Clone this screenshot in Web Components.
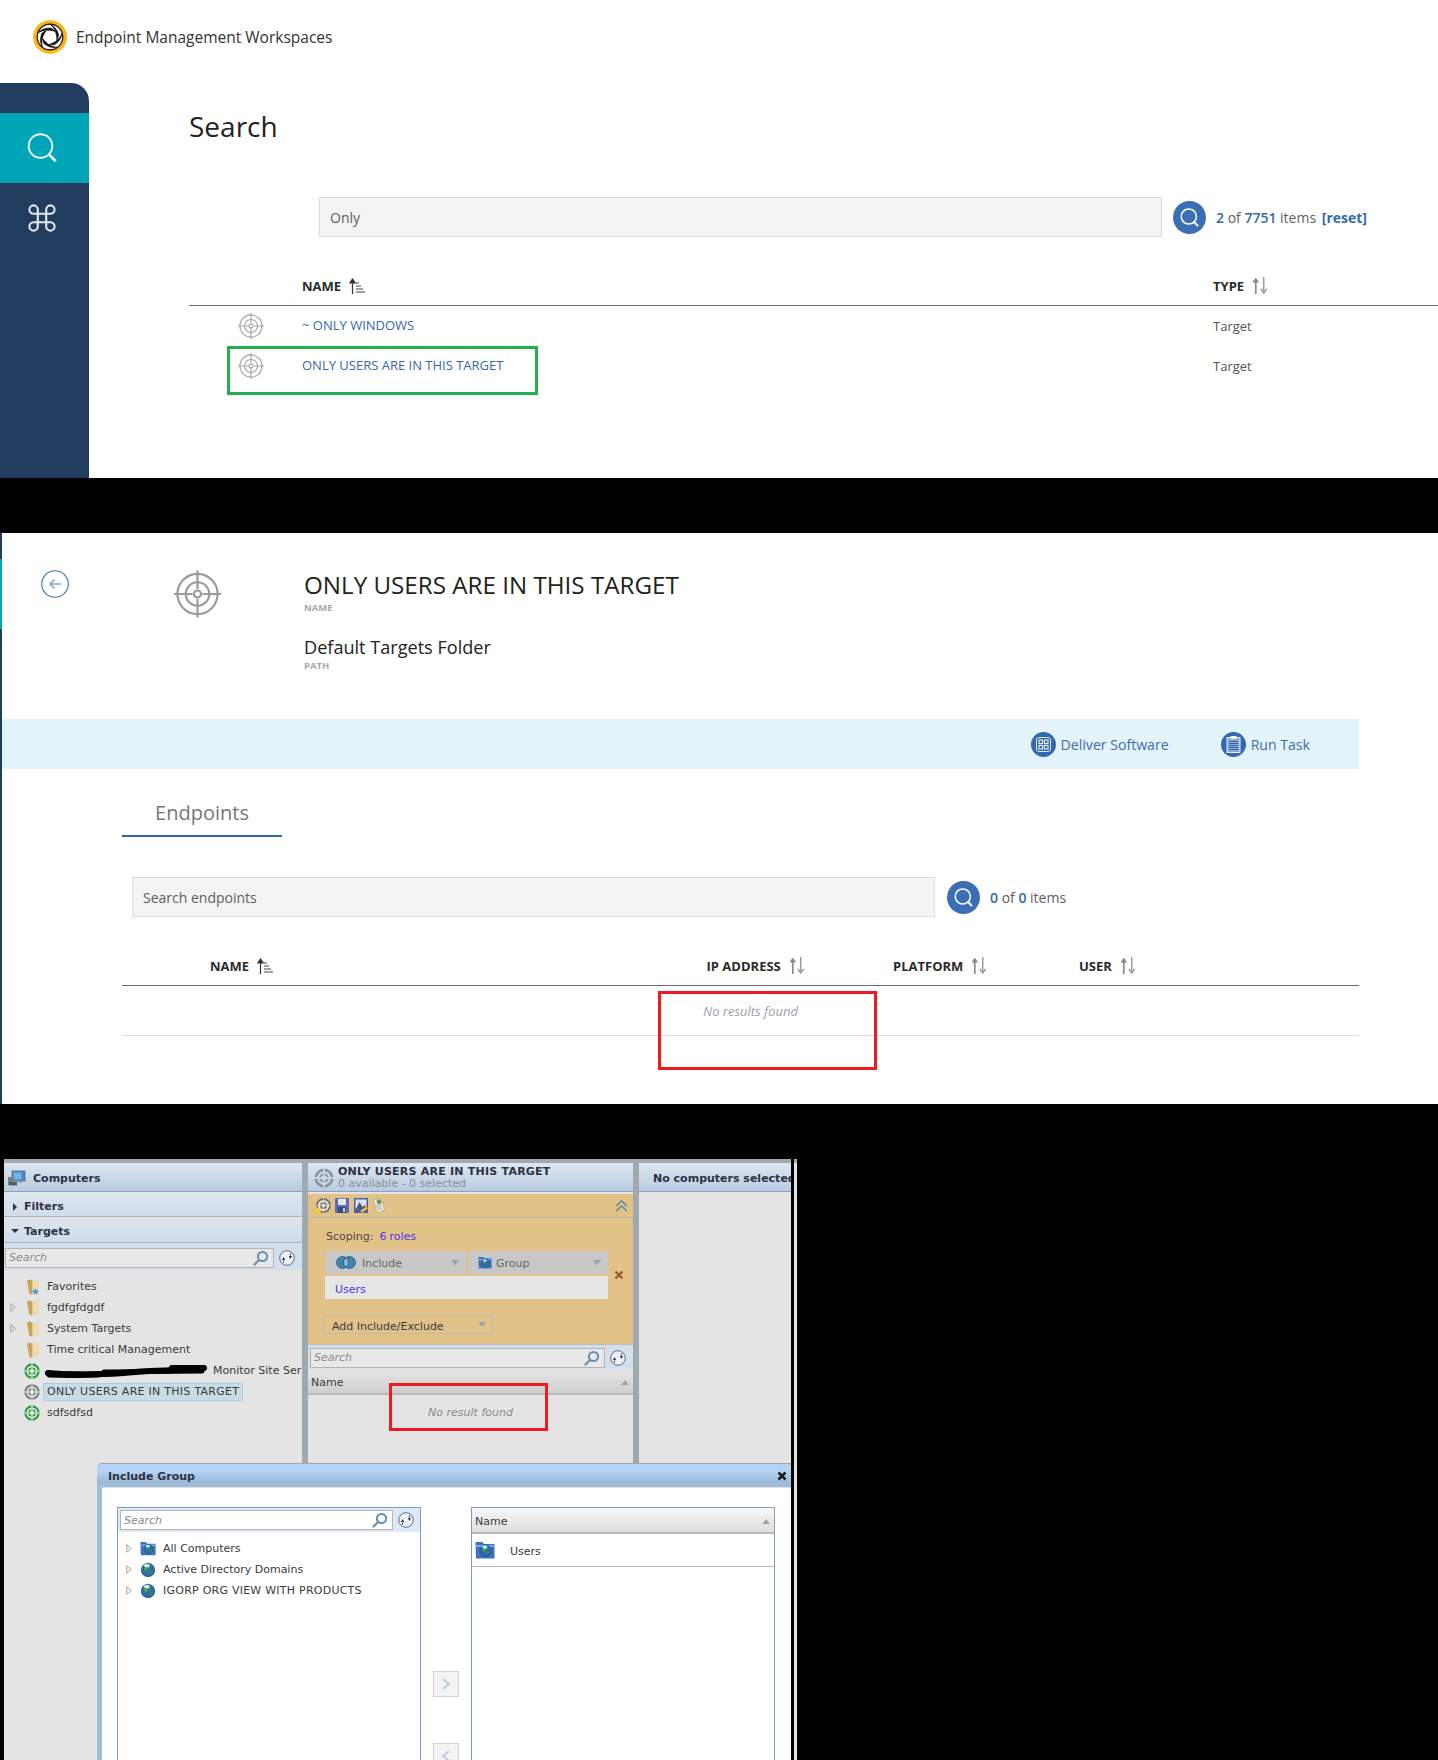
<!DOCTYPE html>
<html lang="en"><head><meta charset="utf-8"><title>Endpoint Management Workspaces</title>
<style>
html,body{margin:0;padding:0;background:#000;}
body{width:1438px;height:1760px;overflow:hidden;font-family:"Open Sans","Noto Sans",sans-serif;}
</style></head><body>
<search-page></search-page>
<detail-page></detail-page>
<legacy-console></legacy-console>
<script>
const targetLg=(c)=>`<svg viewBox="0 0 48 48" width="100%" height="100%" fill="none" stroke="${c}" stroke-width="2.2"><circle cx="24" cy="24" r="20.5"/><circle cx="24" cy="24" r="12"/><circle cx="24" cy="24" r="3.6"/><path d="M24 0v19M24 29v19M0 24h19M29 24h19"/></svg>`;
const targetSm=(c,bg)=>`<svg viewBox="0 0 16 16" width="100%" height="100%" fill="none"><circle cx="8" cy="8" r="6.6" stroke="${c}" stroke-width="2.2"/><circle cx="8" cy="8" r="3" stroke="${c}" stroke-width="1.6"/><path d="M8 0v6M8 10v6M0 8h6M10 8h6" stroke="${bg}" stroke-width="1.1"/></svg>`;
const globe=`<circle cx="8" cy="8" r="6.800" fill="#2a6ea8" stroke="#234a6c" stroke-width=".6"/><path d="M4 6c1.500-1.600 3-1 4-1.800.8.500 2 .8 2.400 1.800-1.200 1-2.400.3-3.200 1.200-.8.900.3 1.800-.8 2.500C5.200 9.200 4.200 7.400 4 6z" fill="#55a548"/><path d="M9.500 10c1-.6 2.200-.4 3 0-.5 1.400-1.400 2.300-2.700 2.800-.6-.8-.6-1.800-.3-2.800z" fill="#3f8f3a"/><path d="M1.600 10.500c2.800 5 10 5 12.800 0-1 4.800-11.800 4.800-12.800 0z" fill="#142c48"/><ellipse cx="6.800" cy="3.600" rx="3" ry="1.700" fill="#e8f6fd" opacity=".92"/>`;
const blades=[0,72,144,216,288].map(r=>`<path transform="rotate(${r} 17 17)" d="M17 4.300C21.500 7.800 23.800 13 23.800 20.300 24.600 18.600 25.300 17 25.800 15.300 24.800 10.600 21.500 6 17 4.300z" fill="#111" stroke="#111" stroke-width=".5"/>`).join('');
const ICONS={
 logo:`<svg viewBox="0 0 34 34" width="100%" height="100%"><ellipse cx="17" cy="17" rx="17" ry="16.700" fill="#fdb515"/><circle cx="17" cy="17" r="12.800" fill="#fff" stroke="#111" stroke-width="1.200"/>${blades}</svg>`,
 navsearch:`<svg viewBox="0 0 30 30" width="100%" height="100%" fill="none" stroke="#e9f7f9" stroke-width="2"><circle cx="13.500" cy="13" r="11.800"/><path d="M22 21.500l6 6" stroke-width="2.600" stroke-linecap="round"/></svg>`,
 navcmd:`<svg viewBox="2 2 20 20" width="100%" height="100%" fill="none" stroke="#e4e9f0" stroke-width="1.500"><path d="M18 3a3 3 0 0 0-3 3v12a3 3 0 0 0 3 3 3 3 0 0 0 3-3 3 3 0 0 0-3-3H6a3 3 0 0 0-3 3 3 3 0 0 0 3 3 3 3 0 0 0 3-3V6a3 3 0 0 0-3-3 3 3 0 0 0-3 3 3 3 0 0 0 3 3h12a3 3 0 0 0 3-3 3 3 0 0 0-3-3z"/></svg>`,
 gosearch:`<svg viewBox="0 0 33 33" width="100%" height="100%" fill="none"><circle cx="16.500" cy="16.500" r="16.500" fill="#3a6fb5"/><circle cx="15.800" cy="15.500" r="7.600" stroke="#fff" stroke-width="1.500"/><path d="M21 21l3.500 3.500" stroke="#fff" stroke-width="1.900" stroke-linecap="round"/></svg>`,
 sortasc:`<svg viewBox="0 0 17 16" width="100%" height="100%"><path d="M3.500 16V3M.8 5l2.700-4L6.200 5z" stroke="#333" stroke-width="1.200" fill="#333"/><path d="M7 5h3M7 8h5M7 11h7M7 14h9" stroke="#444" stroke-width="1.200"/></svg>`,
 sortboth:`<svg viewBox="0 0 17 18" width="100%" height="100%" fill="#888" stroke="#888"><path d="M4 18V3" stroke-width="1.800"/><path d="M1 5.500 4 1l3 4.500z" stroke-width=".6"/><path d="M12.500 0v15" stroke-width="1.300"/><path d="M9.500 12.500l3 4.500 3-4.500" fill="none" stroke-width="1.300"/></svg>`,
 back:`<svg viewBox="0 0 28 28" width="100%" height="100%" fill="none" stroke="#3a6fb5"><circle cx="14" cy="14" r="13.300" stroke-width="1.100"/><path d="M20 14H9M13.500 9.500 9 14l4.500 4.500" stroke="#7da3d3" stroke-width="1.500"/></svg>`,
 targetline:targetLg('#a8a8a8'),
 targetbig:targetLg('#9a9a9a'),
 deliver:`<svg viewBox="0 0 25 25" width="100%" height="100%" fill="none"><circle cx="12.500" cy="12.500" r="12.500" fill="#3168b0"/><rect x="5.500" y="5.500" width="14" height="14" rx="2.500" stroke="#dbe8f6" stroke-width="1"/><g stroke="#fff" stroke-width="1"><rect x="8" y="8" width="3.600" height="3.600"/><rect x="13.400" y="8" width="3.600" height="3.600"/><rect x="8" y="13.400" width="3.600" height="3.600"/><rect x="13.400" y="13.400" width="3.600" height="3.600"/></g></svg>`,
 task:`<svg viewBox="0 0 25 25" width="100%" height="100%" fill="none"><circle cx="12.500" cy="12.500" r="12.500" fill="#3168b0"/><rect x="6" y="5.500" width="13" height="15" fill="#8aabd8" stroke="#e4edf8" stroke-width="1"/><rect x="9.500" y="4" width="6" height="3" fill="#fff"/><path d="M8 9.500h9M8 11.500h9M8 13.500h9M8 15.500h9M8 17.500h9" stroke="#2f5f9f" stroke-width=".9"/></svg>`,
 folder:`<svg viewBox="0 0 12 16" width="100%" height="100%"><path d="M0 1.500 3 .5l2 1h7v13.500H2z" fill="#e6cc94"/><path d="M0 1.500 3 .5 5.500 2V15.500L2.500 15z" fill="#c9a45e"/><path d="M5.500 2H12v13H5.500z" fill="#ecdcb4"/></svg>`,
 folderstar:`<svg viewBox="0 0 12 16" width="100%" height="100%"><path d="M0 1.500 3 .5l2 1h7v13.500H2z" fill="#e6cc94"/><path d="M0 1.500 3 .5 5.500 2V15.500L2.500 15z" fill="#c9a45e"/><path d="M5.500 2H12v13H5.500z" fill="#ecdcb4"/><path d="M8.500 9l1.100 2.300 2.400.3-1.700 1.700.4 2.500-2.200-1.200-2.300 1.200.5-2.500-1.800-1.700 2.500-.3z" fill="#4c9ad8"/></svg>`,
 tgreen:targetSm('#2d9e3d','#e4e4e4'),
 tgray:targetSm('#7f7f7f','#e4e4e4'),
 thead:targetSm('#8f9499','#d5deea'),
 arrow:`<svg viewBox="0 0 6 9" width="100%" height="100%"><path d="M.8.8 5.200 4.500.8 8.200z" fill="none" stroke="#9a9a9a" stroke-width=".9"/></svg>`,
 glass:`<svg viewBox="0 0 16 16" width="100%" height="100%" fill="none"><circle cx="9.500" cy="6.500" r="4.600" stroke="#5d90b8" stroke-width="2"/><path d="M6 10l-4.500 4.500" stroke="#7f8f9e" stroke-width="2.400" stroke-linecap="round"/></svg>`,
 refresh:`<svg viewBox="0 0 16 16" width="100%" height="100%" fill="none"><circle cx="8" cy="8" r="7.300" fill="#eef0f6" stroke="#6a6394" stroke-width="1"/><path d="M3 10h3.200L4.600 7zM13 6H9.800l1.600 3z" fill="#223a5a"/><path d="M4.600 10.500v2M11.400 5.500v-2" stroke="#223a5a" stroke-width="1"/></svg>`,
 computers:`<svg viewBox="0 0 19 17" width="100%" height="100%"><rect x="5" y="1" width="13" height="10" fill="#4a86c8" stroke="#5a6b80" stroke-width=".8"/><rect x="6.500" y="2.500" width="8" height="7" fill="#73b2e8"/><rect x="1" y="7" width="6" height="8" fill="#7a8088"/><rect x="2" y="12" width="8" height="3.500" fill="#565c64"/><rect x="11" y="11" width="4" height="2" fill="#9aa4ae"/></svg>`,
 caretright:`<svg viewBox="0 0 8 8" width="100%" height="100%"><path d="M2 0l4 4-4 4z" fill="#333"/></svg>`,
 caretdown:`<svg viewBox="0 0 8 8" width="100%" height="100%"><path d="M0 2h8L4 6z" fill="#333"/></svg>`,
 tb1:`<svg viewBox="0 0 16 16" width="100%" height="100%"><circle cx="8.500" cy="7.500" r="6.500" fill="#e8e4d8" stroke="#6f6f6f" stroke-width="1.800"/><circle cx="8.500" cy="7.500" r="2.800" fill="none" stroke="#6f6f6f" stroke-width="1.400"/><path d="M8.500 0v15M1 7.500h15" stroke="#dcd4c0" stroke-width=".8"/><path d="M3.200 9.500v6M.2 12.500h6" stroke="#f2cf2d" stroke-width="2.400"/></svg>`,
 tb2:`<svg viewBox="0 0 14 15" width="100%" height="100%"><rect width="14" height="15" rx="1" fill="#5a6cb8"/><rect x="3" y=".8" width="8" height="6.200" fill="#e4e6f0"/><rect x="3" y="9" width="8" height="6" fill="#3a4a86"/><rect x="8" y="10" width="2" height="4" fill="#c8d0e8"/></svg>`,
 tb3:`<svg viewBox="0 0 14 15" width="100%" height="100%"><rect width="14" height="15" fill="#4a60ac"/><rect x="1.500" y="1.500" width="11" height="9" fill="#dde3f2"/><path d="M2 11l3.500-7 3 5 2-2 2.500 4z" fill="#46597d"/><path d="M7 14 13.500 9" stroke="#f0c020" stroke-width="2.400"/><path d="M13 9.500l1-1" stroke="#c8402a" stroke-width="2.400"/></svg>`,
 tb4:`<svg viewBox="0 0 12 15" width="100%" height="100%"><path d="M.5 1.500l8-1.200 3 11.700-7.500 2.800z" fill="#f2f0e4" stroke="#a8a494" stroke-width=".7"/><circle cx="6" cy="3.700" r="2.400" fill="#5aa24a"/><path d="M6 3.700l2.300-.8.200 1.800z" fill="#c84a3a"/><path d="M3 7.500l5.500-1M3.500 9.500l5.500-1M4 11.500l5-1" stroke="#98968a" stroke-width=".8"/></svg>`,
 chevup:`<svg viewBox="0 0 13 12" width="100%" height="100%" fill="none" stroke="#5c86a6" stroke-width="1.500"><path d="M1 6l5.500-5L12 6M1 11l5.500-5L12 11"/></svg>`,
 venn:`<svg viewBox="0 0 20 13" width="100%" height="100%"><circle cx="6.500" cy="6.500" r="6" fill="#3c86b4" stroke="#24506e" stroke-width=".7"/><circle cx="13.500" cy="6.500" r="6" fill="#3c86b4" stroke="#24506e" stroke-width=".7"/><path d="M10 1.700a6 6 0 0 1 0 9.600 6 6 0 0 1 0-9.600z" fill="#9ab8cc" stroke="#24506e" stroke-width=".7"/></svg>`,
 groupico:`<svg viewBox="0 0 20 18" width="100%" height="100%"><path d="M.5 1h7l1.500 2h10.500v14.500H1z" fill="#3e72c4"/><path d="M1 4h18.500v2H1z" fill="#7aa6e4"/><g transform="translate(4 3) scale(.85)">${globe}</g></svg>`,
 globe:`<svg viewBox="0 0 16 16" width="100%" height="100%">${globe}</svg>`,
 cross:`<svg viewBox="0 0 10 10" width="100%" height="100%"><path d="M1.500 1.500l7 7M8.500 1.500l-7 7" stroke="#9a5a33" stroke-width="2.400"/></svg>`,
 crossblack:`<svg viewBox="0 0 10 10" width="100%" height="100%"><path d="M1.500 1.500l7 7M8.500 1.500l-7 7" stroke="#1c1c1c" stroke-width="2.600"/></svg>`,
 triup:`<svg viewBox="0 0 8 5" width="100%" height="100%"><path d="M0 5l4-5 4 5z" fill="#98a4b0"/></svg>`,
 tridown:`<svg viewBox="0 0 8 5" width="100%" height="100%"><path d="M0 0l4 5 4-5z" fill="#98a4b0"/></svg>`,
 scribble:`<svg viewBox="0 0 164 14" width="100%" height="100%" fill="none" stroke="#000" stroke-linecap="round"><path d="M4 9c20 2 35 1 52 1 18 0 30-2 50-3 20 0 35-2 54-3" stroke-width="6"/><path d="M5 11c20 1 40 0 50 0M60 8c30 0 60-1 98-1" stroke-width="5"/><path d="M128 4h30" stroke-width="6"/></svg>`
};
class UiIcon extends HTMLElement{
 constructor(){super();this.attachShadow({mode:'open'});}
 connectedCallback(){
  const w=this.getAttribute('w')||16,h=this.getAttribute('h')||w;
  this.shadowRoot.innerHTML=`<style>:host{display:block;flex:none;width:${w}px;height:${h}px;line-height:0}svg{display:block}</style>${ICONS[this.getAttribute('name')]||''}`;
 }
}
customElements.define('ui-icon',UiIcon);
function el(name,css,html){
 customElements.define(name,class extends HTMLElement{
  constructor(){super();const r=this.attachShadow({mode:'open'});
   const a=n=>this.getAttribute(n)||'';
   r.innerHTML=`<style>${css}</style>`+(typeof html==='function'?html(a):html);}
 });
}
/* modern UI pieces */
el('search-field',`:host{display:flex;align-items:center;font:14px "Open Sans",sans-serif;color:#5f6062}
 .f{box-sizing:border-box;height:40px;background:#f3f3f3;border:1px solid #dcdcdc;padding:0 10px;display:flex;align-items:center}
 .g{margin-left:var(--btn-gap,11px);margin-right:var(--txt-gap,10px)}
 ::slotted(b){color:#3568ae;font-weight:600}::slotted(a){color:#3568ae;font-weight:700;margin-left:2px}`,
 a=>`<div class="f" style="width:${a('w')}px">${a('text')}</div><ui-icon class="g" name="gosearch" w="33"></ui-icon><span><slot></slot></span>`);
el('sort-head',`:host{display:flex;align-items:center;gap:8px;font:700 13px "Open Sans",sans-serif;color:#2b2b2b;white-space:nowrap}
 ui-icon{margin-top:-1px}`,
 a=>`<span><slot></slot></span><ui-icon name="${a('sort')==='asc'?'sortasc':'sortboth'}" w="${a('sort')==='asc'?17:16}" h="${a('sort')==='asc'?16:17}"></ui-icon>`);
el('note-box',`:host{display:block;position:absolute;box-sizing:border-box;border-style:solid;border-width:3px;pointer-events:none}`,'');
el('action-link',`:host{display:flex;align-items:center;gap:5px;font:14.100px "Open Sans",sans-serif;color:#3f6cae;white-space:nowrap}`,
 a=>`<ui-icon name="${a('icon')}" w="25"></ui-icon><slot></slot>`);
el('side-nav',`:host{display:block;width:89px;flex:none;background:#223c60;border-top-right-radius:18px;padding-top:30px;box-sizing:border-box}
 .i{height:70px;display:flex;align-items:center;padding-left:27px}.on{background:#00a5b8}.c{padding-left:28px}`,
 `<div class="i on"><ui-icon name="navsearch" w="30"></ui-icon></div><div class="i c"><ui-icon name="navcmd" w="28"></ui-icon></div>`);
el('search-page',`:host{display:block;height:478px;background:#fff;overflow:hidden}
 header{height:73px;padding:0 0 10px 33px;display:flex;align-items:center;gap:9px;font:15.500px "Open Sans",sans-serif;color:#333}
 .b{display:flex;height:395px}
 main{flex:1;padding-left:100px;min-width:0}
 h1{font:400 28px/40px "Open Sans",sans-serif;color:#222;margin:23px 0 51px}
 search-field{margin-left:130px}
 .t{position:relative}
 .r{display:grid;grid-template-columns:113px 911px 1fr;align-items:center}
 .h{align-items:end;border-bottom:1px solid #6e6e72;box-sizing:border-box;padding-bottom:10px;height:69px}
 .d{height:40px;font:13px "Open Sans",sans-serif;color:#555}
 .d a{color:#3568ae;padding-bottom:2px}.ic{padding-left:49px}
 note-box{left:38px;top:109px;width:311px;height:49px;border-color:#22b14c}`,
 `<header><ui-icon name="logo" w="34"></ui-icon><span>Endpoint Management Workspaces</span></header>
 <div class="b"><side-nav></side-nav><main><h1>Search</h1>
 <search-field w="843" text="Only"><b>2</b> of <b>7751</b> items <a>[reset]</a></search-field>
 <div class="t"><div class="r h"><span></span><sort-head sort="asc">NAME</sort-head><sort-head>TYPE</sort-head></div>
 <div class="r d"><div class="ic"><ui-icon name="targetline" w="26"></ui-icon></div><a>~ ONLY WINDOWS</a><span>Target</span></div>
 <div class="r d"><div class="ic"><ui-icon name="targetline" w="26"></ui-icon></div><a>ONLY USERS ARE IN THIS TARGET</a><span>Target</span></div>
 <note-box></note-box></div></main></div>`);
el('detail-page',`:host{display:block;height:571px;margin-top:55px;background:#fff;position:relative;overflow:hidden}
 .w{display:flex;height:100%}
 .s{width:2px;flex:none;background:linear-gradient(#223c60 26px,#00a5b8 26px,#00a5b8 96px,#223c60 96px)}
 .m{flex:1;min-width:0}
 .top{height:186px;box-sizing:border-box;padding-top:37px;display:flex;align-items:flex-start}
 .bk{margin-left:39px}.tg{margin-left:105px}
 .txt{margin-left:83px;margin-top:-1px;color:#222}
 .n{font:400 24.200px/32px "Open Sans",sans-serif;white-space:nowrap}
 .l{font:700 9.500px/12px "Open Sans",sans-serif;color:#a8a8a8;margin-top:1px}
 .p{font:400 18.100px/24px "Open Sans",sans-serif;margin-top:21px}
 .l2{margin-top:1px}
 .band{width:1357px;height:50px;background:#e3f3fa;display:flex;justify-content:flex-end;align-items:center;gap:52px;padding-right:49px;box-sizing:border-box}
 .tab{margin-left:120px;width:160px;height:68px;box-sizing:border-box;padding-top:29px;border-bottom:2px solid #2f66ae;text-align:center;font:20px/30px "Open Sans",sans-serif;color:#777}
 search-field{margin:40px 0 0 130px;--btn-gap:11.500px;--txt-gap:10.500px}
 .t{position:relative;margin-left:120px;width:1237px}
 .r{display:grid;grid-template-columns:88px 496.500px 186.500px 186px 1fr;align-items:end;height:69px;box-sizing:border-box;padding-bottom:10px;border-bottom:1px solid #6e6e72}
 .nr{height:50px;box-sizing:border-box;border-bottom:1px solid #ddd;padding:16px 0 0 581px;font:italic 13px/18px "Open Sans",sans-serif;color:#9aa2a8}
 note-box{left:536px;top:74px;width:219px;height:79px;border-color:#ed1c24}`,
 `<div class="w"><div class="s"></div><div class="m">
 <div class="top"><ui-icon class="bk" name="back" w="28"></ui-icon><ui-icon class="tg" name="targetbig" w="47" h="48"></ui-icon>
 <div class="txt"><div class="n">ONLY USERS ARE IN THIS TARGET</div><div class="l">NAME</div><div class="p">Default Targets Folder</div><div class="l l2">PATH</div></div></div>
 <div class="band"><action-link icon="deliver">Deliver Software</action-link><action-link icon="task">Run Task</action-link></div>
 <div class="tab">Endpoints</div>
 <search-field w="803" text="Search endpoints"><b>0</b> of <b>0</b> items</search-field>
 <div class="t"><div class="r"><span></span><sort-head sort="asc">NAME</sort-head><sort-head>IP ADDRESS</sort-head><sort-head>PLATFORM</sort-head><sort-head>USER</sort-head></div>
 <div class="nr">No results found</div><note-box></note-box></div>
 </div></div>`);
/* legacy console pieces */
const LF='11px "DejaVu Sans",Verdana,sans-serif';
el('leg-head',`:host{display:flex;align-items:center;height:29px;box-sizing:border-box;padding-top:var(--hp,2px);border-bottom:1px solid #8aa2bd;background:linear-gradient(#dfe6ef,#b9cbe1);font:700 ${LF};color:#2c3244;white-space:nowrap;overflow:hidden}`,`<slot></slot>`);
el('leg-acc',`:host{display:flex;align-items:center;gap:5px;box-sizing:border-box;padding-left:7px;margin-top:2px;background:linear-gradient(#dce5ef,#d0dcea);border-bottom:1px solid #a8b4c2;font:700 ${LF};color:#2c3244}`,
 a=>`<ui-icon name="${a('icon')}" w="8" h="8"></ui-icon><slot></slot>`);
el('leg-search',`:host{display:flex;align-items:center;box-sizing:border-box;height:var(--h,27px);background:var(--bg,#d3dfeb);padding-left:var(--pl,1px);padding-top:var(--pt,0)}
 .i{box-sizing:border-box;height:20px;flex:1;min-width:0;background:var(--ibg,#e8e8e8);border:1px solid #b4b4b4;display:flex;align-items:center;justify-content:space-between;padding:0 4px 0 3px;font:italic ${LF};color:#8a8a8a}
 .x{margin:0 var(--rm,7px) 0 var(--lm,5px)}`,
 `<div class="i"><span>Search</span><ui-icon name="glass" w="16"></ui-icon></div><ui-icon class="x" name="refresh" w="16"></ui-icon>`);
el('leg-row',`:host{display:flex;align-items:center;height:21px;font:${LF};color:#3a3a3a;white-space:nowrap}
 .a{width:6px;margin-left:var(--am,6px)}.g{margin-left:var(--ig,8px)}
 .t{margin-left:var(--tg,7px)}
 :host([sel]) .t{background:#c8dce6;outline:1px solid #a4d2ea;padding:0 3px;height:16px;line-height:16px;margin-left:4px}`,
 a=>`<span class="a">${a('arrow')?'<ui-icon name="arrow" w="6" h="9"></ui-icon>':''}</span><ui-icon class="g" name="${a('icon')}" w="${a('iw')||16}" h="${a('ih')||16}"></ui-icon><span class="t"><slot></slot></span>`);
el('leg-drop',`:host{display:flex;align-items:center;box-sizing:border-box;height:23px;background:#c8c8c8;width:140px;font:${LF};color:#666;padding:0 7px 0 10px;gap:5px}
 .c{flex:1;padding-top:1px}.venn{margin-right:1px}.groupico{margin-right:-1px}`,a=>`<ui-icon class="${a('icon')}" name="${a('icon')}" w="${a('icon')==='venn'?20:14}" h="13"></ui-icon><span class="c"><slot></slot></span><ui-icon name="tridown" w="8" h="5"></ui-icon>`);
el('list-head',`:host{display:flex;align-items:center;justify-content:space-between;box-sizing:border-box;height:26px;padding:var(--lp,2px) 4px 0 3px;background:linear-gradient(var(--a,#e6e6e6),var(--b,#cfcfcf));border-bottom:2px solid #b8b8b8;font:${LF};color:#3c3c3c}`,
 `<span><slot></slot></span><ui-icon name="triup" w="8" h="5"></ui-icon>`);
el('move-btn',`:host{display:flex;flex:none;align-items:center;justify-content:center;box-sizing:border-box;width:26px;height:26px;background:#f3f3f3;border:1px solid #d4d4d4}`,
 a=>`<svg width="8" height="12" viewBox="0 0 8 12" fill="none" stroke="#bccadc" stroke-width="1.800"><path d="${a('dir')==='left'?'M7 1 1 6l6 5':'M1 1l6 5-6 5'}"/></svg>`);
el('include-dialog',`:host{display:flex;flex-direction:column;position:absolute;left:93px;top:300px;width:694px;bottom:0;box-sizing:border-box;background:#9ebcd8;border-top:1px solid #a8a8a8;border-top-left-radius:5px;overflow:hidden;font:${LF};color:#3a3a3a}
 .h{height:23px;flex:none;display:flex;align-items:center;justify-content:space-between;padding:1px 4px 0 11px;box-sizing:border-box;background:linear-gradient(#b4d3f6 30%,#9ebcd8 75%);font-weight:700;color:#2c3244}
 .b{flex:1;min-height:0;margin-left:5px;background:#fff;border-top:1px solid #e2e2e2;display:flex;padding:19px 0 0 15px;overflow:hidden}
 .box{width:304px;box-sizing:border-box;border:1px solid #7a9cc6;border-bottom:0;height:300px;flex:none}
 .mid{width:50px;flex:none;box-sizing:border-box;height:300px;padding:164px 0 0 12px;display:flex;flex-direction:column;gap:46px}
 leg-search{--h:24px;--bg:#dbe9f8;--ibg:#fff;--pl:2px;--rm:6px;--lm:5px;margin-bottom:6px}
 leg-row{--am:8px;--ig:8px;--tg:7px}
 .it{display:flex;align-items:center;height:33px;box-sizing:border-box;border-bottom:1px solid #b8b8b8;padding-left:3px}
 .it span{margin-left:15px;padding-top:2px}
 list-head{--a:#f7f7f7;--b:#dedede}`,
 `<div class="h"><span>Include Group</span><ui-icon name="crossblack" w="10"></ui-icon></div>
 <div class="b"><div class="box"><leg-search></leg-search>
 <leg-row arrow="1" icon="groupico" iw="16" ih="15">All Computers</leg-row><leg-row arrow="1" icon="globe">Active Directory Domains</leg-row><leg-row arrow="1" icon="globe" style="letter-spacing:.24px">IGORP ORG VIEW WITH PRODUCTS</leg-row></div>
 <div class="mid"><move-btn></move-btn><move-btn dir="left"></move-btn></div>
 <div class="box"><list-head>Name</list-head><div class="it"><ui-icon name="groupico" w="20" h="18"></ui-icon><span>Users</span></div></div></div>`);
el('legacy-console',`:host{display:flex;height:601px;margin-top:55px;width:797px;padding-left:4px;box-sizing:border-box;background:#000;overflow:hidden}
 .w{position:relative;width:787px;flex:none;border-top:4px solid #a0a8b0;box-sizing:border-box;background:#e4e4e4;display:flex;height:601px}
 .edge{width:3px;margin-left:3px;background:linear-gradient(#a0a8b0 4px,#e4e4e4 4px);height:100%}
 .p{box-sizing:border-box;overflow:hidden;background:#e4e4e4;height:597px;position:relative}
 .sp{width:6px;flex:none;background:#a0a8b0;height:597px}
 .p1{width:298px}.p2{width:325px}.p3{width:152px}
 .tree{padding-top:6px}
 .p1 leg-head{padding-left:3px;gap:7px}
 .scr{display:flex;align-items:center;height:21px;font:${LF};color:#3a3a3a;white-space:nowrap}
 .ht{line-height:13px;margin-left:4px;letter-spacing:.23px}.ht small{display:block;font:${LF};color:#8a8f96;letter-spacing:0;margin-top:-1px}
 .p2 leg-head{padding-left:6px}
 .tb{height:24px;margin-top:2px;background:#e2c286;border-bottom:1px solid #b4b4b4;box-sizing:border-box;display:flex;align-items:center;padding:0 5px 0 7px;gap:4px}
 .tb .up{margin-left:auto}
 .or{background:#e2c286;height:127px;box-sizing:border-box;padding:9px 0 0 17px;font:${LF};color:#4a4a4a;border-bottom:1px solid #bdbdbd}
 .or a{color:#5533ee}.sc{line-height:16px;margin-left:1px;padding-top:2px;height:16px;box-sizing:border-box;word-spacing:-.5px}
 .fb{display:flex;align-items:center;margin-top:8px}
 .cl{width:283px}.dd{display:flex;gap:2px;margin-left:1px}
 .wr{height:23px;margin-top:2px;background:#e6e6e6;padding-left:10px;line-height:27px;overflow:hidden}
 .fx{margin-left:6px}
 .add{display:flex;align-items:center;justify-content:space-between;width:170px;height:19px;margin:16px 0 0 -2px;box-sizing:border-box;border:1px solid #b8bcb4;padding:3px 6px 0 8px;color:#3c3c3c}
 .add ui-icon{margin-top:-3px}
 leg-search.q{--h:24px;--pl:2px;--lm:5px;--rm:7px;--pt:1px}
 list-head{--lp:3px}
 .nr{text-align:center;font:italic ${LF};line-height:16px;color:#8a8a8a;padding-top:10px}
 note-box{left:81px;top:220px;width:159px;height:48px;border-color:#ed1c24}
 .p2 leg-head{--hp:1px}
 .p3 leg-head{padding-left:14px}`,
 `<div class="w">
 <section class="p p1"><leg-head><ui-icon name="computers" w="19" h="17"></ui-icon>Computers</leg-head>
  <leg-acc icon="caretright" style="height:23px;padding-top:3px">Filters</leg-acc><leg-acc icon="caretdown" style="height:24px;padding-top:1px">Targets</leg-acc>
  <leg-search style="--pt:2px"></leg-search>
  <div class="tree">
  <leg-row icon="folderstar" iw="12" style="--ig:11px;--tg:8px">Favorites</leg-row>
  <leg-row arrow="1" icon="folder" iw="12" style="--ig:11px;--tg:8px">fgdfgfdgdf</leg-row>
  <leg-row arrow="1" icon="folder" iw="12" style="--ig:11px;--tg:8px">System Targets</leg-row>
  <leg-row icon="folder" iw="12" style="--ig:11px;--tg:8px">Time critical Management</leg-row>
  <div class="scr"><span style="width:20px"></span><ui-icon name="tgreen" w="16"></ui-icon><ui-icon name="scribble" w="164" h="14" style="margin:0 5px 0 4px"></ui-icon><span>Monitor Site Ser</span></div>
  <leg-row icon="tgray" sel="1" style="letter-spacing:.27px">ONLY USERS ARE IN THIS TARGET</leg-row>
  <leg-row icon="tgreen">sdfsdfsd</leg-row>
  </div></section>
 <div class="sp"></div>
 <section class="p p2"><leg-head><ui-icon name="thead" w="20"></ui-icon><div class="ht">ONLY USERS ARE IN THIS TARGET<small>0 available - 0 selected</small></div></leg-head>
  <div class="tb"><ui-icon name="tb1" w="16"></ui-icon><ui-icon name="tb2" w="14" h="15"></ui-icon><ui-icon name="tb3" w="14" h="15" style="margin-left:1px"></ui-icon><ui-icon name="tb4" w="12" h="15" style="margin-left:1px"></ui-icon><ui-icon class="up" name="chevup" w="13" h="12"></ui-icon></div>
  <div class="or"><div class="sc">Scoping: &nbsp;<a>6 roles</a></div>
   <div class="fb"><div class="cl"><div class="dd"><leg-drop icon="venn">Include</leg-drop><leg-drop icon="groupico">Group</leg-drop></div><div class="wr"><a>Users</a></div></div><ui-icon class="fx" name="cross" w="10"></ui-icon></div>
   <div class="add"><span>Add Include/Exclude</span><ui-icon name="tridown" w="8" h="5"></ui-icon></div></div>
  <leg-search class="q"></leg-search><list-head>Name</list-head><div class="nr">No result found</div><note-box></note-box></section>
 <div class="sp"></div>
 <section class="p p3"><leg-head>No computers selected</leg-head></section>
 <include-dialog></include-dialog>
 </div><div class="edge"></div>`);
</script>
</body></html>
